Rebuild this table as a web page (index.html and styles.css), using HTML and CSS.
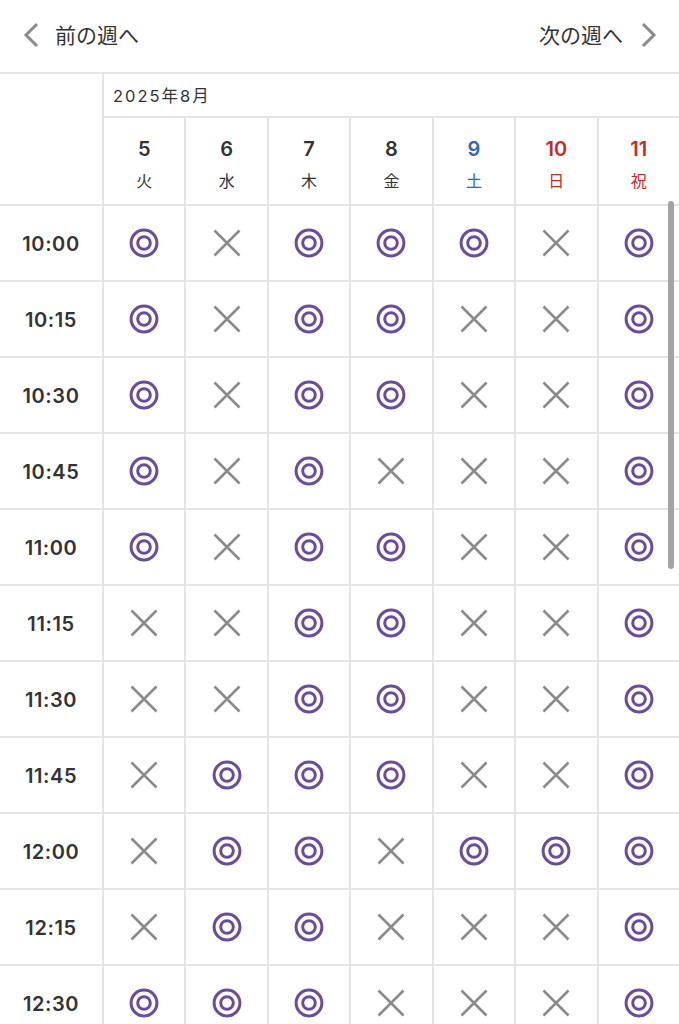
FILE: index.html
```html
<!DOCTYPE html>
<html lang="ja">
<head>
<meta charset="utf-8">
<title>予約カレンダー</title>
<link rel="stylesheet" href="styles.css">
</head>
<body>
<svg class="defs" width="0" height="0" aria-hidden="true">
  <defs>
    <symbol id="maru" viewBox="0 0 30 30">
      <circle cx="15" cy="15" r="12.9" fill="none" stroke="currentColor" stroke-width="3"/>
      <circle cx="15" cy="15" r="6.3" fill="none" stroke="currentColor" stroke-width="3"/>
    </symbol>
    <symbol id="batsu" viewBox="0 0 28 28">
      <path d="M1.5 1.5 L26.5 26.5 M26.5 1.5 L1.5 26.5" fill="none" stroke="currentColor" stroke-width="2.6"/>
    </symbol>
  </defs>
</svg>

<nav class="weeknav">
  <a class="navlink prev" href="#">
    <svg class="chev" viewBox="0 0 16 26"><path d="M14 2 L3 13 L14 24" fill="none" stroke="currentColor" stroke-width="3"/></svg>
    <span>前の週へ</span>
  </a>
  <a class="navlink next" href="#">
    <span>次の週へ</span>
    <svg class="chev" viewBox="0 0 16 26"><path d="M2 2 L13 13 L2 24" fill="none" stroke="currentColor" stroke-width="3"/></svg>
  </a>
</nav>

<div class="wrap">
  <div class="grid">
    <div class="corner"></div>
    <div class="month">2025年8月</div>
    <div class="day"><span class="num">5</span><span class="wd">火</span></div>
    <div class="day"><span class="num">6</span><span class="wd">水</span></div>
    <div class="day"><span class="num">7</span><span class="wd">木</span></div>
    <div class="day"><span class="num">8</span><span class="wd">金</span></div>
    <div class="day sat"><span class="num">9</span><span class="wd">土</span></div>
    <div class="day hol"><span class="num">10</span><span class="wd">日</span></div>
    <div class="day hol"><span class="num">11</span><span class="wd">祝</span></div>

    <div class="time">10:00</div>
    <div class="c o"><svg><use href="#maru"/></svg></div>
    <div class="c x"><svg><use href="#batsu"/></svg></div>
    <div class="c o"><svg><use href="#maru"/></svg></div>
    <div class="c o"><svg><use href="#maru"/></svg></div>
    <div class="c o"><svg><use href="#maru"/></svg></div>
    <div class="c x"><svg><use href="#batsu"/></svg></div>
    <div class="c o"><svg><use href="#maru"/></svg></div>

    <div class="time">10:15</div>
    <div class="c o"><svg><use href="#maru"/></svg></div>
    <div class="c x"><svg><use href="#batsu"/></svg></div>
    <div class="c o"><svg><use href="#maru"/></svg></div>
    <div class="c o"><svg><use href="#maru"/></svg></div>
    <div class="c x"><svg><use href="#batsu"/></svg></div>
    <div class="c x"><svg><use href="#batsu"/></svg></div>
    <div class="c o"><svg><use href="#maru"/></svg></div>

    <div class="time">10:30</div>
    <div class="c o"><svg><use href="#maru"/></svg></div>
    <div class="c x"><svg><use href="#batsu"/></svg></div>
    <div class="c o"><svg><use href="#maru"/></svg></div>
    <div class="c o"><svg><use href="#maru"/></svg></div>
    <div class="c x"><svg><use href="#batsu"/></svg></div>
    <div class="c x"><svg><use href="#batsu"/></svg></div>
    <div class="c o"><svg><use href="#maru"/></svg></div>

    <div class="time">10:45</div>
    <div class="c o"><svg><use href="#maru"/></svg></div>
    <div class="c x"><svg><use href="#batsu"/></svg></div>
    <div class="c o"><svg><use href="#maru"/></svg></div>
    <div class="c x"><svg><use href="#batsu"/></svg></div>
    <div class="c x"><svg><use href="#batsu"/></svg></div>
    <div class="c x"><svg><use href="#batsu"/></svg></div>
    <div class="c o"><svg><use href="#maru"/></svg></div>

    <div class="time">11:00</div>
    <div class="c o"><svg><use href="#maru"/></svg></div>
    <div class="c x"><svg><use href="#batsu"/></svg></div>
    <div class="c o"><svg><use href="#maru"/></svg></div>
    <div class="c o"><svg><use href="#maru"/></svg></div>
    <div class="c x"><svg><use href="#batsu"/></svg></div>
    <div class="c x"><svg><use href="#batsu"/></svg></div>
    <div class="c o"><svg><use href="#maru"/></svg></div>

    <div class="time">11:15</div>
    <div class="c x"><svg><use href="#batsu"/></svg></div>
    <div class="c x"><svg><use href="#batsu"/></svg></div>
    <div class="c o"><svg><use href="#maru"/></svg></div>
    <div class="c o"><svg><use href="#maru"/></svg></div>
    <div class="c x"><svg><use href="#batsu"/></svg></div>
    <div class="c x"><svg><use href="#batsu"/></svg></div>
    <div class="c o"><svg><use href="#maru"/></svg></div>

    <div class="time">11:30</div>
    <div class="c x"><svg><use href="#batsu"/></svg></div>
    <div class="c x"><svg><use href="#batsu"/></svg></div>
    <div class="c o"><svg><use href="#maru"/></svg></div>
    <div class="c o"><svg><use href="#maru"/></svg></div>
    <div class="c x"><svg><use href="#batsu"/></svg></div>
    <div class="c x"><svg><use href="#batsu"/></svg></div>
    <div class="c o"><svg><use href="#maru"/></svg></div>

    <div class="time">11:45</div>
    <div class="c x"><svg><use href="#batsu"/></svg></div>
    <div class="c o"><svg><use href="#maru"/></svg></div>
    <div class="c o"><svg><use href="#maru"/></svg></div>
    <div class="c o"><svg><use href="#maru"/></svg></div>
    <div class="c x"><svg><use href="#batsu"/></svg></div>
    <div class="c x"><svg><use href="#batsu"/></svg></div>
    <div class="c o"><svg><use href="#maru"/></svg></div>

    <div class="time">12:00</div>
    <div class="c x"><svg><use href="#batsu"/></svg></div>
    <div class="c o"><svg><use href="#maru"/></svg></div>
    <div class="c o"><svg><use href="#maru"/></svg></div>
    <div class="c x"><svg><use href="#batsu"/></svg></div>
    <div class="c o"><svg><use href="#maru"/></svg></div>
    <div class="c o"><svg><use href="#maru"/></svg></div>
    <div class="c o"><svg><use href="#maru"/></svg></div>

    <div class="time">12:15</div>
    <div class="c x"><svg><use href="#batsu"/></svg></div>
    <div class="c o"><svg><use href="#maru"/></svg></div>
    <div class="c o"><svg><use href="#maru"/></svg></div>
    <div class="c x"><svg><use href="#batsu"/></svg></div>
    <div class="c x"><svg><use href="#batsu"/></svg></div>
    <div class="c x"><svg><use href="#batsu"/></svg></div>
    <div class="c o"><svg><use href="#maru"/></svg></div>

    <div class="time">12:30</div>
    <div class="c o"><svg><use href="#maru"/></svg></div>
    <div class="c o"><svg><use href="#maru"/></svg></div>
    <div class="c o"><svg><use href="#maru"/></svg></div>
    <div class="c x"><svg><use href="#batsu"/></svg></div>
    <div class="c x"><svg><use href="#batsu"/></svg></div>
    <div class="c x"><svg><use href="#batsu"/></svg></div>
    <div class="c o"><svg><use href="#maru"/></svg></div>
  </div>
  <div class="scrollbar"></div>
</div>
</body>
</html>
```

FILE: styles.css
```css
html, body {
  margin: 0;
  padding: 0;
  background: #fff;
  overflow: hidden;
  height: 1024px;
}
body {
  font-family: "Inter", "Noto Sans CJK JP", sans-serif;
  color: #333;
}
.defs {
  position: absolute;
  width: 0;
  height: 0;
  overflow: hidden;
}
.weeknav {
  height: 72px;
  display: flex;
  justify-content: space-between;
  align-items: center;
  padding: 0 22px 0 23px;
}
.navlink {
  display: flex;
  align-items: center;
  gap: 16px;
  text-decoration: none;
  color: #333;
  font-family: "Noto Sans CJK JP", sans-serif;
  font-size: 21px;
  line-height: 1;
  margin-top: -3px;
}
.navlink.next { gap: 18px; }
.chev {
  width: 16px;
  height: 26px;
  color: #8a8a8a;
  flex: none;
}
.wrap {
  position: relative;
}
.grid {
  display: grid;
  grid-template-columns: 102px repeat(7, 1fr);
  grid-template-rows: 42px 86px;
  grid-auto-rows: 74px;
  gap: 2px;
  background: #e4e4e4;
  border-top: 2px solid #e4e4e4;
}
.grid > div {
  background: #fff;
}
.corner {
  grid-row: span 2;
}
.month {
  grid-column: span 7;
  display: flex;
  align-items: center;
  padding-left: 9px;
  font-size: 16.5px;
  letter-spacing: 2px;
  color: #333;
}
.day {
  display: flex;
  flex-direction: column;
  align-items: center;
  justify-content: center;
  gap: 13px;
  padding-top: 4px;
}
.day .num {
  font-size: 20px;
  font-weight: 600;
  line-height: 1;
}
.day .wd {
  font-family: "Noto Sans CJK JP", sans-serif;
  font-size: 16px;
  line-height: 1;
}
.day.sat { color: #2c66c2; }
.day.hol { color: #c62a27; }
.time {
  display: flex;
  align-items: center;
  justify-content: center;
  padding-top: 2px;
  font-size: 20px;
  font-weight: 600;
  letter-spacing: 0.6px;
  color: #333;
}
.c {
  display: flex;
  align-items: center;
  justify-content: center;
}
.c.o svg {
  width: 30px;
  height: 30px;
  color: #6a4c9a;
}
.c.x svg {
  width: 28px;
  height: 28px;
  color: #8b8b8b;
}
.scrollbar {
  position: absolute;
  top: 129px;
  right: 5px;
  width: 6px;
  height: 368px;
  border-radius: 3px;
  background: #a3a3a3;
}
```
